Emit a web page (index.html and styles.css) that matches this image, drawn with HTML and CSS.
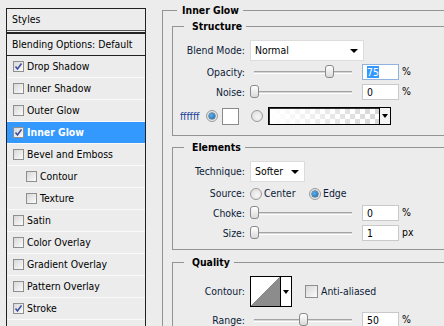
FILE: index.html
```html
<!DOCTYPE html>
<html lang="en">
<head>
<meta charset="UTF-8">
<meta name="viewport" content="width=device-width, initial-scale=1.0">
<title>Layer Style - Inner Glow</title>
<link rel="stylesheet" href="styles.css">
</head>
<body>

<div class="dialog">

  <!-- left: list of layer styles -->
  <div class="styles-list">
    <div class="list-head">Styles</div>
    <div class="list-blend">Blending Options: Default</div>
    <div class="list-item"><span class="check on"><svg viewBox="0 0 11 11" width="11" height="11"><path d="M2.5 5.5 L4.5 8 L8.5 2.5" fill="none" stroke="#3f4fa0" stroke-width="1.6"/></svg></span>Drop Shadow</div>
    <div class="list-item"><span class="check"></span>Inner Shadow</div>
    <div class="list-item"><span class="check"></span>Outer Glow</div>
    <div class="list-item selected"><span class="check on"><svg viewBox="0 0 11 11" width="11" height="11"><path d="M2.5 5.5 L4.5 8 L8.5 2.5" fill="none" stroke="#3f4fa0" stroke-width="1.6"/></svg></span>Inner Glow</div>
    <div class="list-item"><span class="check"></span>Bevel and Emboss</div>
    <div class="list-item sub"><span class="check"></span>Contour</div>
    <div class="list-item sub"><span class="check"></span>Texture</div>
    <div class="list-item"><span class="check"></span>Satin</div>
    <div class="list-item"><span class="check"></span>Color Overlay</div>
    <div class="list-item"><span class="check"></span>Gradient Overlay</div>
    <div class="list-item"><span class="check"></span>Pattern Overlay</div>
    <div class="list-item"><span class="check on"><svg viewBox="0 0 11 11" width="11" height="11"><path d="M2.5 5.5 L4.5 8 L8.5 2.5" fill="none" stroke="#3f4fa0" stroke-width="1.6"/></svg></span>Stroke</div>
    <div class="list-item"></div>
  </div>

  <!-- right: settings for the selected style -->
  <div class="settings">
    <fieldset class="group outer">
      <legend>Inner Glow</legend>

      <fieldset class="group inner structure">
        <legend>Structure</legend>
        <div class="row row-blend">
          <span class="lbl">Blend Mode:</span>
          <div class="select blend-select">Normal<span class="arrow"></span></div>
        </div>
        <div class="row row-opacity">
          <span class="lbl">Opacity:</span>
          <div class="slider"><span class="thumb" style="left:75px"></span></div>
          <div class="num focused"><span class="sel">75</span></div>
          <span class="unit">%</span>
        </div>
        <div class="row row-noise">
          <span class="lbl">Noise:</span>
          <div class="slider"><span class="thumb" style="left:0px"></span></div>
          <div class="num">0</div>
          <span class="unit">%</span>
        </div>
        <div class="row row-color">
          <span class="hex">ffffff</span>
          <span class="radio on"></span>
          <span class="swatch"></span>
          <span class="radio radio-grad"></span>
          <div class="gradient">
            <span class="grad-fill"></span>
            <span class="grad-arrow"><span class="arrow"></span></span>
          </div>
        </div>
      </fieldset>

      <fieldset class="group inner elements">
        <legend>Elements</legend>
        <div class="row row-tech">
          <span class="lbl">Technique:</span>
          <div class="select tech-select">Softer<span class="arrow"></span></div>
        </div>
        <div class="row row-source">
          <span class="lbl">Source:</span>
          <span class="opt opt-center"><span class="radio"></span>Center</span>
          <span class="opt"><span class="radio on"></span>Edge</span>
        </div>
        <div class="row row-choke">
          <span class="lbl">Choke:</span>
          <div class="slider"><span class="thumb" style="left:0px"></span></div>
          <div class="num">0</div>
          <span class="unit">%</span>
        </div>
        <div class="row row-size">
          <span class="lbl">Size:</span>
          <div class="slider"><span class="thumb" style="left:0px"></span></div>
          <div class="num">1</div>
          <span class="unit">px</span>
        </div>
      </fieldset>

      <fieldset class="group inner quality">
        <legend>Quality</legend>
        <div class="row row-contour">
          <span class="lbl">Contour:</span>
          <div class="contour">
            <span class="contour-preview"></span>
            <span class="contour-arrow"><span class="arrow"></span></span>
          </div>
          <span class="check anti"></span>
          <span class="anti-label">Anti-aliased</span>
        </div>
        <div class="row row-range">
          <span class="lbl">Range:</span>
          <div class="slider"><span class="thumb" style="left:49px"></span></div>
          <div class="num">50</div>
          <span class="unit">%</span>
        </div>
      </fieldset>
    </fieldset>
  </div>

</div>

</body>
</html>
```

FILE: styles.css
```css
body {
  margin: 0;
  background-color: #ececec;
  font-family: "DejaVu Sans Condensed", "DejaVu Sans", sans-serif;
  font-size: 10.4px;
  line-height: 13px;
  color: #000;
  overflow: hidden;
}
.dialog {
  display: flex;
  align-items: flex-start;
}

/* styles list */
.styles-list {
  flex: none;
  width: 140px;
  margin: 8px 0 0 6px;
  box-sizing: border-box;
  border-left: 1px solid #222;
  border-right: 1px solid #222;
  white-space: nowrap;
}
.list-head {
  height: 21px;
  line-height: 21px;
  padding-left: 5px;
  border-top: 1px solid #222;
  border-bottom: 1px solid #555;
}
.list-blend {
  height: 21px;
  line-height: 21px;
  padding-left: 5px;
  margin-top: 1px;
  border-top: 2px solid #222;
  border-bottom: 1px solid #222;
}
.list-item {
  display: flex;
  align-items: center;
  height: 21px;
  padding-left: 6px;
  border-bottom: 1px solid #fafafa;
}
.list-item.sub {
  padding-left: 19px;
}
.list-item.selected {
  background-color: #3399ff;
  color: #fff;
  font-weight: bold;
}
.check {
  display: inline-block;
  width: 11px;
  height: 11px;
  margin-right: 3px;
  box-sizing: border-box;
  border: 1px solid #8f8f8f;
  background: linear-gradient(135deg, #d8d8d8, #fbfbfb);
  flex: none;
}
.check svg {
  display: block;
  margin: -1px;
}

/* group boxes */
.settings {
  flex: none;
  margin: 4px 0 0 16px;
}
.group {
  margin: 0;
  padding: 0;
  border: 0;
  border-top: 1px solid #939393;
  border-left: 1px solid #939393;
  min-width: 0;
}
.group legend {
  font-weight: bold;
  line-height: 13px;
}
.outer {
  width: 300px;
  padding-left: 9px;
}
.outer > legend {
  margin-left: 5px;
  padding: 0 4px 0 5px;
}
.inner > legend {
  margin-left: 11px;
  padding: 0 4px 0 8px;
}
.structure {
  margin-top: 3px;
  padding-bottom: 10px;
  border-bottom: 1px solid #939393;
}
.elements {
  margin-top: 5px;
  padding-bottom: 8px;
  border-bottom: 1px solid #939393;
}
.quality {
  margin-top: 6px;
  padding-bottom: 20px;
}

/* rows */
.row {
  display: flex;
  align-items: center;
  color: #0d1b38;
  white-space: nowrap;
}
.lbl {
  width: 72px;
  margin-right: 5px;
  text-align: right;
  flex: none;
}
.row-blend { margin-top: 7px; height: 21px; }
.row-opacity { margin-top: 3px; height: 16px; }
.row-noise { margin-top: 4px; height: 16px; }
.row-color { margin-top: 7px; height: 18px; padding-left: 7px; }
.row-tech { margin-top: 7px; height: 21px; }
.row-source { margin-top: 2px; height: 19px; }
.row-choke { margin-top: 2px; height: 16px; }
.row-size { margin-top: 4px; height: 16px; }
.row-contour { margin-top: 7px; height: 31px; }
.row-range { margin-top: 5px; height: 16px; }

/* dropdowns */
.select {
  position: relative;
  height: 21px;
  box-sizing: border-box;
  padding-left: 4px;
  display: flex;
  align-items: center;
  background-color: #fff;
  border: 1px solid #dcdcdc;
  color: #000;
}
.blend-select { width: 114px; }
.tech-select { width: 55px; }
.arrow {
  display: inline-block;
  width: 0;
  height: 0;
  border-left: 4px solid transparent;
  border-right: 4px solid transparent;
  border-top: 4px solid #000;
}
.select .arrow {
  position: absolute;
  right: 5px;
  top: 8px;
}

/* sliders */
.slider {
  position: relative;
  width: 106px;
  height: 16px;
  margin-right: 6px;
  flex: none;
}
.slider::before {
  content: "";
  position: absolute;
  left: 4px;
  width: 98px;
  top: 7px;
  height: 1px;
  border-top: 1px solid #a3a3a3;
  border-bottom: 1px solid #fdfdfd;
  background-color: #d6d6d6;
}
.thumb {
  position: absolute;
  top: 1px;
  width: 9px;
  height: 13px;
  box-sizing: border-box;
  border: 1px solid #8a8a8a;
  border-radius: 3px;
  background: linear-gradient(to bottom, #fff, #dadada);
}

/* number fields */
.num {
  width: 37px;
  height: 16px;
  box-sizing: border-box;
  padding-left: 4px;
  border: 1px solid #c9c9c9;
  background-color: #fff;
  line-height: 14px;
  color: #000;
  flex: none;
}
.num.focused {
  border-color: #8fb2de;
}
.sel {
  background-color: #3399ff;
  color: #fff;
}
.unit {
  margin-left: 3px;
  margin-top: -2px;
  color: #000;
}

/* radio buttons */
.radio {
  position: relative;
  display: inline-block;
  width: 12px;
  height: 12px;
  box-sizing: border-box;
  border-radius: 50%;
  border: 1px solid #9a9a9a;
  background: radial-gradient(circle at 60% 60%, #f7f7f7, #d9d9d9);
  flex: none;
}
.radio.on::after {
  content: "";
  position: absolute;
  left: 2px;
  top: 2px;
  width: 6px;
  height: 6px;
  border-radius: 50%;
  background: radial-gradient(circle at 40% 40%, #59b6f2, #0f5a9c);
  box-shadow: 0 0 0 0.5px #1d3f66;
}

/* colour / gradient row */
.hex {
  width: 26px;
  color: #20409a;
}
.swatch {
  width: 17px;
  height: 17px;
  margin-left: 4px;
  box-sizing: border-box;
  border: 1px solid #8a8a8a;
  background-color: #fff;
}
.radio-grad {
  margin-left: 12px;
}
.gradient {
  display: flex;
  width: 123px;
  height: 18px;
  margin-left: 5px;
  box-sizing: border-box;
  border: 1px solid #000;
  box-shadow: inset 1px 1px 0 #333;
}
.grad-fill {
  flex: 1;
  margin: 1px 0 0 1px;
  background-image:
    linear-gradient(to right, #fff 0%, rgba(255, 255, 255, 0.15) 100%),
    conic-gradient(#cfcfcf 25%, #fff 0 50%, #cfcfcf 0 75%, #fff 0);
  background-size: auto, 10px 10px;
}
.grad-arrow {
  width: 10px;
  border-left: 1px solid #000;
  background-color: #f4f4f4;
  display: flex;
  align-items: center;
  justify-content: center;
}
.grad-arrow .arrow {
  border-left-width: 3px;
  border-right-width: 3px;
  border-top-width: 4px;
}

/* source options */
.opt {
  display: flex;
  align-items: center;
}
.opt .radio {
  margin-right: 2px;
}
.opt-center {
  width: 59px;
}

/* contour picker */
.contour {
  display: flex;
  width: 42px;
  height: 31px;
  box-sizing: border-box;
  border: 1px solid #000;
  background-color: #fff;
}
.contour-preview {
  width: 29px;
  background: linear-gradient(to bottom right, #fff 50%, #8c8c8c 50%);
}
.contour-arrow {
  flex: 1;
  border-left: 1px solid #000;
  display: flex;
  align-items: center;
  justify-content: center;
}
.contour-arrow .arrow {
  border-left-width: 3px;
  border-right-width: 3px;
}
.check.anti {
  width: 13px;
  height: 13px;
  margin-left: 13px;
}
.anti-label {
  color: #0d1b38;
}
```
